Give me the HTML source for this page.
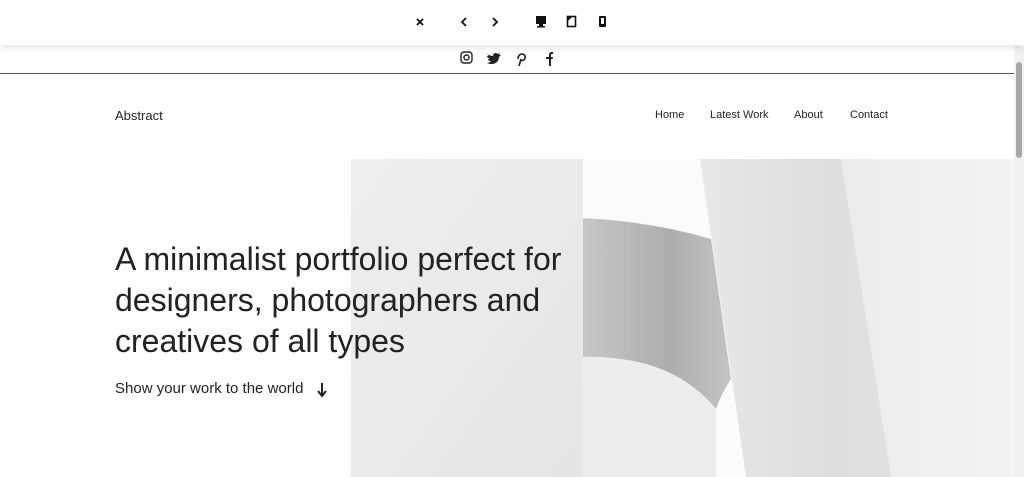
<!DOCTYPE html>
<html><head><style>
body{margin:0;width:1024px;height:477px;overflow:hidden;background:#fff;font-family:"Liberation Sans",sans-serif;color:#222;position:relative}
.top{position:absolute;left:0;top:0;width:1024px;height:45px;background:#fff;box-shadow:0 2px 8px rgba(0,0,0,.12);z-index:3}
.bar{position:absolute;top:45px;left:0;width:1024px;height:28px;border-bottom:1px solid #555;background:#fff}
.sb{position:absolute;right:0;top:46px;width:10px;height:431px;background:#f1f1f1}
.sb div{position:absolute;left:2px;top:16px;width:6px;height:96px;background:#a8a8a8;border-radius:3px}
.logo{position:absolute;left:115px;top:108px;font-size:13px;color:#222}
.nav{position:absolute;top:109px;font-size:11px;color:#222}
h1{position:absolute;left:115px;top:239px;margin:0;font-weight:normal;font-size:32px;line-height:41px;color:#222;z-index:2}
.sub{position:absolute;left:115px;top:380px;font-size:15px;color:#222;z-index:2}
</style></head><body>
<div class="top">
<svg width="1024" height="45">
<g stroke="#111" stroke-width="1.8" fill="none">
<path d="M417 19l6 6M423 19l-6 6"/>
<path d="M466 18l-4 4 4 4"/><path d="M493 18l4 4-4 4"/>
</g>
<rect x="536" y="16" width="10" height="8" fill="#111"/><rect x="539" y="24" width="4" height="2" fill="#111"/><rect x="537" y="26" width="8" height="1.5" fill="#111"/>
<rect x="567.5" y="16.5" width="8" height="10" fill="none" stroke="#111" stroke-width="1.6"/><path d="M568 17h4l-4 4z" fill="#111"/>
<rect x="599" y="16" width="7" height="11" rx="1" fill="#111"/><rect x="601" y="18" width="3" height="6" fill="#fff"/>
</svg></div>
<div class="bar"><svg width="1024" height="28">
<rect x="461" y="7" width="11" height="11" rx="3" fill="none" stroke="#222" stroke-width="1.4"/><circle cx="466.5" cy="12.5" r="2.5" fill="none" stroke="#222" stroke-width="1.4"/>
<path d="M487 9c2 1 4 2 6 2c0-3 3-4 5-2l2-1-1 2 2 0-2 2c0 5-5 9-12 6c2 0 3-1 4-2c-2 0-3-1-3-2h2c-2-1-3-2-3-3l2 0c-2-1-2-3-2-4z" fill="#222"/>
<path d="M519 21l2-7M518 14c0-3 2-5 4-5s4 2 3 4c-1 3-3 3-4 2" fill="none" stroke="#222" stroke-width="1.6"/>
<path d="M549 21v-7h-3v-2h3v-2c0-2 1-3 3-3h1v2h-1c-1 0-1 1-1 1v2h2l-.4 2h-1.6v7z" fill="#222"/>
</svg></div>
<div class="sb"><div></div></div>
<div class="logo">Abstract</div>
<div class="nav" style="left:655px">Home</div>
<div class="nav" style="left:710px">Latest Work</div>
<div class="nav" style="left:794px">About</div>
<div class="nav" style="left:850px">Contact</div>
<svg style="position:absolute;left:351px;top:159px" width="663" height="318">
<defs>
<linearGradient id="b" x1="0" x2="1"><stop offset="0" stop-color="#c8c8c8"/><stop offset=".6" stop-color="#adadad"/><stop offset="1" stop-color="#c4c4c4"/></linearGradient>
<linearGradient id="l" x1="0" x2="1" y1="0" y2="1"><stop offset="0" stop-color="#eeeeee"/><stop offset="1" stop-color="#e6e6e6"/></linearGradient>
<linearGradient id="r" x1="0" x2="1"><stop offset="0" stop-color="#e8e8e8"/><stop offset=".4" stop-color="#dedede"/><stop offset="1" stop-color="#e4e4e4"/></linearGradient>
<linearGradient id="r2" x1="0" x2="1"><stop offset="0" stop-color="#ececec"/><stop offset="1" stop-color="#f3f3f3"/></linearGradient>
</defs>
<rect width="663" height="318" fill="#fbfbfb"/>
<path d="M228 59 Q300 62 360 80 L380 220 Q370 235 365 250 Q320 195 228 198z" fill="url(#b)"/>
<path d="M228 198 Q320 195 365 250 L365 318 H228z" fill="#ededed"/>
<path d="M0 0 H232 V318 H0z" fill="url(#l)"/>
<path d="M349 0 H663 V318 H395z" fill="url(#r)"/>
<path d="M490 0 H663 V318 H540z" fill="url(#r2)"/>
</svg>
<h1>A minimalist portfolio perfect for<br>designers, photographers and<br>creatives of all types</h1>
<div class="sub">Show your work to the world</div>
<svg style="position:absolute;left:316px;top:382px" width="12" height="16"><path d="M6 1v12M2 9l4 5 4-5" fill="none" stroke="#222" stroke-width="2"/></svg>
</body></html>
